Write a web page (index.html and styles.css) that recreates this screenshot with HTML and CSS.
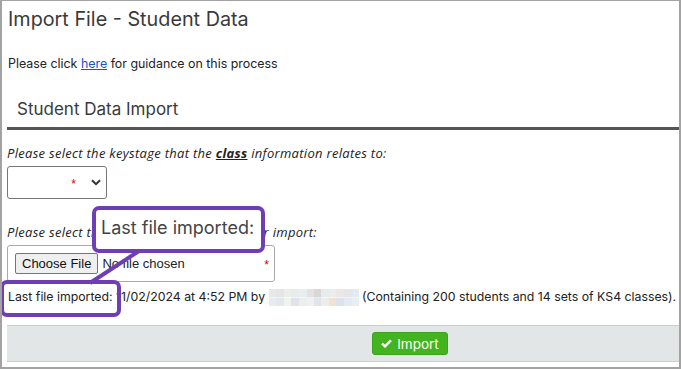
FILE: index.html
```html
<!DOCTYPE html>
<html lang="en">
<head>
    <meta charset="UTF-8">
    <title>Import File - Student Data</title>
    <link rel="stylesheet" href="styles.css">
</head>
<body>
    <div class="page">
        <h1 class="title">Import File - Student Data</h1>
        <p class="intro">Please click <a href="#">here</a> for guidance on this process</p>

        <div class="panel">
            <h2 class="panel-head">Student Data Import</h2>

            <p class="label">Please select the keystage that the <b><u>class</u></b> information relates to:</p>
            <div class="selectbx">
                <span class="req">*</span>
                <svg class="chev" width="10" height="7" viewBox="0 0 10 7"><path d="M1 1.2 5 5.2 9 1.2" fill="none" stroke="#333" stroke-width="2"/></svg>
            </div>

            <p class="label second">Please select the student data file to use for import:</p>
            <div class="filebx">
                <span class="choose">Choose File</span>
                <span class="nofile">No file chosen</span>
                <span class="req">*</span>
            </div>

            <p class="last">Last file imported: 11/02/2024 at 4:52 PM by <span class="blur"></span> (Containing 200 students and 14 sets of KS4 classes).</p>

            <div class="footer">
                <button class="import">
                    <svg width="11" height="9" viewBox="0 0 11 9"><path d="M1 4.6 4 7.4 10 1.4" fill="none" stroke="#fff" stroke-width="2.4"/></svg>
                    Import
                </button>
            </div>
        </div>

        <!-- annotation callouts -->
        <div class="callout big">Last file imported:</div>
        <div class="callout small"></div>
        <svg class="pointer" width="60" height="40" viewBox="0 0 60 40"><line x1="55" y1="4" x2="6" y2="36" stroke="#6d3fb2" stroke-width="4"/></svg>
    </div>
</body>
</html>
```

FILE: styles.css
```css
*{
    margin:0;
    padding:0;
    box-sizing:border-box;
}
body{
    font-family: Inter, "Liberation Sans", sans-serif;
    color:#333;
    background:#fff;
}
.page{
    position:relative;
    width:681px;
    height:369px;
    border:1px solid #a3a3a3;
    border-left-width:2px;
    border-right-width:2px;
    border-bottom-width:2px;
    padding:0 0 0 5px;
    overflow:hidden;
}
.title{
    font-weight:400;
    font-size:19.8px;
    line-height:28px;
    margin:4px 0 0 1px;
    color:#3a3a3a;
}
.intro{
    font-size:12.4px;
    margin:23px 0 0 1px;
    color:#222;
}
.intro a{
    color:#1a4fd0;
}
.panel-head{
    font-weight:400;
    font-size:17px;
    line-height:24px;
    color:#3a3a3a;
    padding:26px 0 6px 10px;
    border-bottom:3px solid #555;
}
.label{
    font-family:"Open Sans", sans-serif;
    font-style:italic;
    font-size:13px;
    letter-spacing:0.3px;
    color:#222;
    margin-top:15px;
    line-height:17px;
}
.label.second{
    margin-top:25px;
}
.selectbx{
    position:relative;
    width:100px;
    height:33px;
    margin-top:4px;
    border:1px solid #767676;
    border-radius:3px;
    display:flex;
    align-items:center;
    justify-content:flex-end;
    padding-right:5px;
    gap:15px;
}
.req{
    color:#d00;
    font-size:12px;
    font-family:"Liberation Sans", sans-serif;
    line-height:10px;
    padding-top:3px;
}
.filebx{
    width:268px;
    height:37px;
    margin-top:4px;
    border:1px solid #aaa;
    border-radius:3px;
    display:flex;
    align-items:center;
    padding:0 5px 0 7px;
    font-family:"Liberation Sans", sans-serif;
    font-size:13px;
}
.choose{
    background:#efefef;
    border:1px solid #767676;
    border-radius:2px;
    padding:2px 6px;
    color:#111;
    line-height:15px;
}
.nofile{
    flex:1;
    margin-left:4px;
    color:#222;
}
.last{
    margin-top:7px;
    margin-left:1px;
    font-size:12.3px;
    line-height:16px;
    color:#222;
    white-space:nowrap;
}
.blur{
    display:inline-block;
    vertical-align:-5px;
    width:90px;
    height:17px;
    background:
        linear-gradient(90deg,#e8e8ea 0 8%,#e6e4e4 8% 17%,#eceeed 17% 25%,#e5ecea 25% 33%,#e8edf0 33% 42%,#e2e2e6 42% 50%,#d9d6d6 50% 58%,#e6ebf0 58% 67%,#ececec 67% 75%,#eae7e4 75% 83%,#e6e6ea 83% 92%,#e2ebf3 92%) top/100% 50% no-repeat,
        linear-gradient(90deg,#eaebee 0 8%,#e3e8ee 8% 17%,#f0f4ef 17% 25%,#e2e3ea 25% 33%,#ebeeef 33% 42%,#f0f0f0 42% 50%,#dfe5ea 50% 58%,#ecefe5 58% 67%,#f0e3d6 67% 75%,#dde3ea 75% 83%,#e3eaf3 83% 92%,#e8eef6 92%) bottom/100% 50% no-repeat;
}
.footer{
    margin-top:19px;
    height:37px;
    background:#e3e6e7;
    border-top:1px solid #ccc;
    border-bottom:1px solid #ccc;
    display:flex;
    align-items:center;
    padding-left:365px;
}
.import{
    display:flex;
    align-items:center;
    gap:5px;
    height:23px;
    width:76px;
    justify-content:center;
    background:#41b41f;
    border:1px solid #3aa51c;
    border-radius:3px;
    color:#fff;
    font-family:Inter, sans-serif;
    font-size:13.5px;
}

/* annotation overlay */
.callout{
    position:absolute;
    border:4px solid #6d3fb2;
    border-radius:7px;
    background:#fff;
}
.callout.big{
    left:90px;
    top:205px;
    width:173px;
    height:47px;
    font-size:18px;
    color:#444;
    padding:7px 0 0 5px;
}
.callout.small{
    left:-2px;
    top:279px;
    width:121px;
    height:37px;
    background:none;
}
.pointer{
    position:absolute;
    left:82px;
    top:246px;
}
```
